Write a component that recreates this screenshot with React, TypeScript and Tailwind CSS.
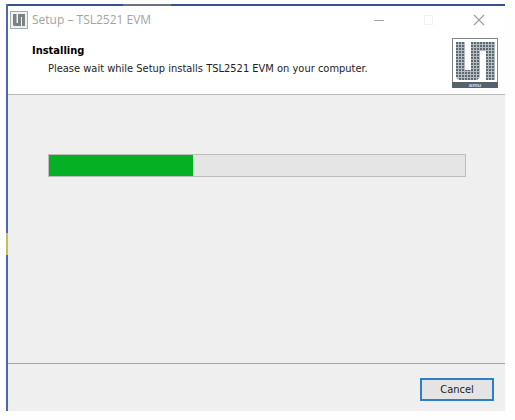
const PROGRESS = 34.5;

// the snake-like mark: down the left, along the bottom, up the middle, over and down the right
const MARK = "M4 4H13V32H19V4H43V42H34V13H28V39L25 42H7L4 39Z";

function SmallLogo() {
  return (
    <svg viewBox="0 0 18 18" className="size-[18px] shrink-0" aria-hidden="true">
      <rect x="0.5" y="0.5" width="17" height="17" fill="#eef0f1" stroke="#a8adb0" />
      <path d="M3 3H6.5V12H8V3H15V15H12V6H11V15H4L3 14Z" fill="#7c8184" />
    </svg>
  );
}

function Logo() {
  return (
    <svg viewBox="0 0 46 50" className="h-[50px] w-[46px] shrink-0" aria-hidden="true">
      <defs>
        <pattern id="dots" x="4" y="4" width="3" height="3" patternUnits="userSpaceOnUse">
          <rect width="3" height="3" fill="#b4bcc1" />
          <rect width="2" height="2" fill="#5c6971" />
        </pattern>
      </defs>
      <rect x="0.5" y="0.5" width="45" height="49" fill="#fff" stroke="#7d878c" />
      <path d={MARK} fill="url(#dots)" />
      <rect y="44" width="46" height="6" fill="#56626a" />
      <text x="23" y="49" textAnchor="middle" fontSize="6" fontWeight="bold" fill="#d5dade" fontFamily="Liberation Sans, sans-serif">
        amu
      </text>
    </svg>
  );
}

function WindowButtons() {
  return (
    <div className="flex gap-8 pr-[17px]">
      <button type="button" aria-label="Minimize" className="flex size-[18px] items-center justify-center">
        <svg viewBox="0 0 12 12" className="size-3" stroke="#a6a6a6" fill="none">
          <path d="M1 6.5H11" />
        </svg>
      </button>
      <button type="button" aria-label="Maximize" disabled className="flex size-[18px] items-center justify-center">
        <svg viewBox="0 0 12 12" className="size-3" stroke="#f1f1f1" fill="none">
          <rect x="1.5" y="1.5" width="8" height="9" />
        </svg>
      </button>
      <button type="button" aria-label="Close" className="flex size-[18px] items-center justify-center">
        <svg viewBox="0 0 12 12" className="size-3" stroke="#a0a0a0" strokeWidth="1.2" fill="none">
          <path d="M1 1L11 11M11 1L1 11" />
        </svg>
      </button>
    </div>
  );
}

export default function App() {
  return (
    <div className="min-h-screen bg-[#fefefe] pt-1 pr-[10px] pb-[9px] pl-[6px] font-['DejaVu_Sans_Condensed','DejaVu_Sans',sans-serif] text-[11px] text-[#222]">
      <div className="flex">
        <div className="flex w-[2px] shrink-0 flex-col bg-[#4a69ae]">
          <div className="h-[229px]" />
          <div className="h-[22px] bg-[#c5bd62]" />
        </div>

        <div className="flex min-h-[407px] grow flex-col border-t-2 border-[#34528f] bg-[#efefef]">
          <header className="border-b border-[#b9b9b9] bg-white">
            <div className="-mt-[2px] flex justify-center pr-[220px]">
              <div className="h-[2px] w-12 bg-[#6d7280]" />
            </div>
            <div className="flex items-center justify-between pt-[5px] pl-[2px]">
              <div className="flex items-center gap-1">
                <SmallLogo />
                <h1 className="font-['Open_Sans',sans-serif] text-[12px] leading-[18px] text-[#a3a3a3]">Setup – TSL2521 EVM</h1>
              </div>
              <WindowButtons />
            </div>
            <div className="flex items-start justify-between pt-[9px] pr-[7px] pb-[6px] pl-6">
              <div className="pt-1">
                <h2 className="font-bold leading-[18px] text-black">Installing</h2>
                <p className="pl-4 leading-[18px]">Please wait while Setup installs TSL2521 EVM on your computer.</p>
              </div>
              <Logo />
            </div>
          </header>

          <main className="grow pt-[59px] pr-[39px] pl-10">
            <progress
              aria-label="Installation progress"
              value={PROGRESS}
              max={100}
              className="block h-[23px] w-full appearance-none border border-[#bcbcbc] bg-[#e5e5e5] [&::-webkit-progress-bar]:bg-[#e5e5e5] [&::-webkit-progress-value]:bg-[#06b025]"
            />
          </main>

          <footer className="flex justify-end border-t border-[#a5a5a5] pt-[14px] pr-[11px] pb-[10px]">
            <button type="button" className="h-[23px] w-[74px] border-2 border-[#2c80cb] bg-[#e4e4e4] leading-4">
              Cancel
            </button>
          </footer>
        </div>
      </div>
    </div>
  );
}
